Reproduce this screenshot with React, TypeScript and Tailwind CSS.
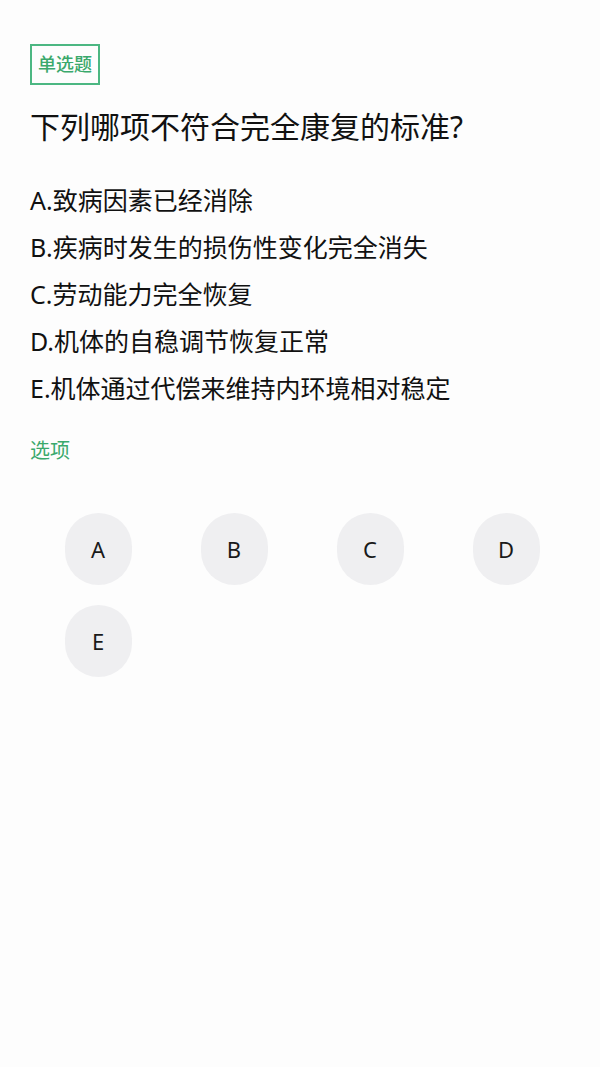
const options = [
  "A.致病因素已经消除",
  "B.疾病时发生的损伤性变化完全消失",
  "C.劳动能力完全恢复",
  "D.机体的自稳调节恢复正常",
  "E.机体通过代偿来维持内环境相对稳定",
];

const letters = ["A", "B", "C", "D", "E"];

export default function App() {
  return (
    <div
      className="min-h-[1067px] w-full bg-[#fdfdfd] px-[30px] pt-[44px] text-[#111111]"
      style={{ fontFamily: '"Noto Sans", "Noto Sans CJK SC", sans-serif' }}
    >
      <div className="flex">
        <span className="flex h-[41px] items-center border-2 border-[#4cb782] px-[6px] text-[18px] font-medium text-[#3aa96c]">
          单选题
        </span>
      </div>

      <h1 className="mt-[22px] text-[30px] leading-[40px] font-normal">
        下列哪项不符合完全康复的标准?
      </h1>

      <div className="mt-[30px] flex flex-col">
        {options.map((o) => (
          <div key={o} className="h-[47px] text-[25px] leading-[47px]">
            {o}
          </div>
        ))}
      </div>

      <div className="mt-[25px] text-[20px] leading-[28px] text-[#3aa96c]">选项</div>

      <div className="mt-[48px] mr-[-4px] grid grid-cols-4 gap-y-[20px]">
        {letters.map((l) => (
          <div key={l} className="flex justify-center">
            <button className="flex h-[72px] w-[67px] items-center justify-center rounded-full bg-[#efeff1] text-[22px] text-[#1a1a1a]">
              {l}
            </button>
          </div>
        ))}
      </div>
    </div>
  );
}
